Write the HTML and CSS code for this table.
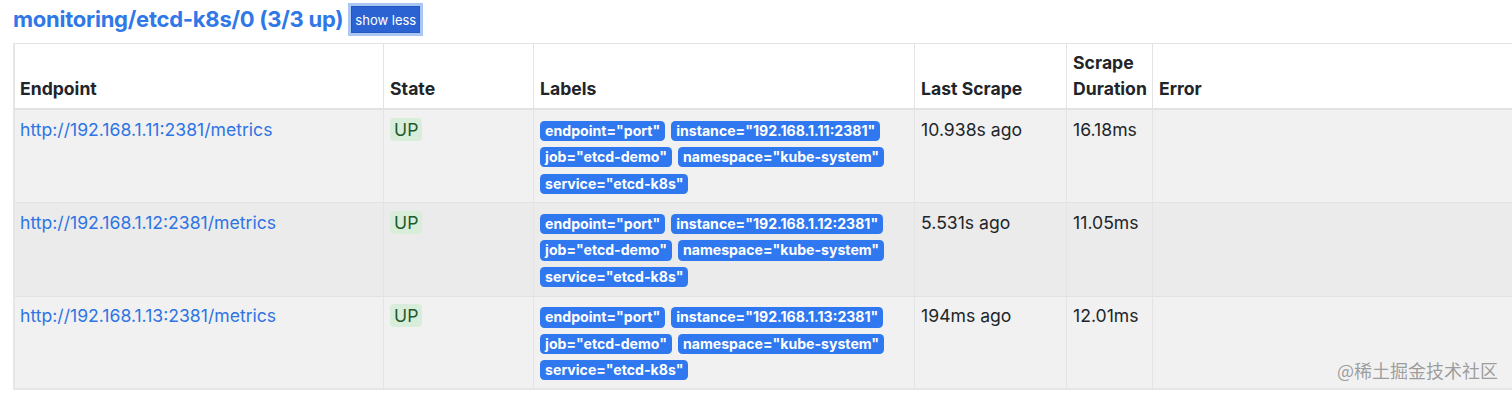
FILE: index.html
```html
<!DOCTYPE html>
<html lang="en">
<head>
  <meta charset="UTF-8" />
  <meta name="viewport" content="width=device-width, initial-scale=1" />
  <title>Targets</title>
  <link rel="stylesheet" href="styles.css">
</head>
<body>

  <div class="pool-head">
    <a class="pool-title" href="#pool-monitoring/etcd-k8s/0">monitoring/etcd-k8s/0 (3/3 up)</a>
    <button class="btn-toggle">show less</button>
  </div>

  <table class="targets">
    <colgroup>
      <col class="c-endpoint">
      <col class="c-state">
      <col class="c-labels">
      <col class="c-last">
      <col class="c-dur">
      <col>
    </colgroup>
    <thead>
      <tr>
        <th>Endpoint</th>
        <th>State</th>
        <th>Labels</th>
        <th>Last Scrape</th>
        <th>Scrape Duration</th>
        <th>Error</th>
      </tr>
    </thead>
    <tbody>
      <tr>
        <td><a href="#">http://192.168.1.11:2381/metrics</a></td>
        <td><span class="state-up">UP</span></td>
        <td>
          <span class="label">endpoint="port"</span>
          <span class="label">instance="192.168.1.11:2381"</span>
          <span class="label">job="etcd-demo"</span>
          <span class="label">namespace="kube-system"</span>
          <span class="label">service="etcd-k8s"</span>
        </td>
        <td>10.938s ago</td>
        <td>16.18ms</td>
        <td></td>
      </tr>
      <tr class="hover">
        <td><a href="#">http://192.168.1.12:2381/metrics</a></td>
        <td><span class="state-up">UP</span></td>
        <td>
          <span class="label">endpoint="port"</span>
          <span class="label">instance="192.168.1.12:2381"</span>
          <span class="label">job="etcd-demo"</span>
          <span class="label">namespace="kube-system"</span>
          <span class="label">service="etcd-k8s"</span>
        </td>
        <td>5.531s ago</td>
        <td>11.05ms</td>
        <td></td>
      </tr>
      <tr>
        <td><a href="#">http://192.168.1.13:2381/metrics</a></td>
        <td><span class="state-up">UP</span></td>
        <td>
          <span class="label">endpoint="port"</span>
          <span class="label">instance="192.168.1.13:2381"</span>
          <span class="label">job="etcd-demo"</span>
          <span class="label">namespace="kube-system"</span>
          <span class="label">service="etcd-k8s"</span>
        </td>
        <td>194ms ago</td>
        <td>12.01ms</td>
        <td></td>
      </tr>
    </tbody>
  </table>

  <div class="watermark">@稀土掘金技术社区</div>

</body>
</html>
```

FILE: styles.css
```css
body {
  font-family: 'Inter', 'Liberation Sans', sans-serif;
  font-size: 17.6px;
  line-height: 1.5;
  color: #212529;
  background: #fff;
  margin: 0;
  padding: 0 13px;
  overflow: hidden;
}

a {
  color: #2f74e4;
  text-decoration: none;
}

.pool-head {
  display: flex;
  align-items: center;
  height: 39px;
  margin-bottom: 4px;
}

.pool-title {
  font-size: 22px;
  font-weight: bold;
  color: #3077e8;
  letter-spacing: -0.25px;
}

.btn-toggle {
  margin-left: 8px;
  height: 27px;
  padding: 0 3px;
  font-family: inherit;
  font-size: 13px;
  color: #fff;
  background: #2b64d2;
  border: 1px solid #2559c0;
  border-radius: 0;
  box-shadow: 0 0 0 3px #a9c6f4;
}

.targets {
  width: 1540px;
  table-layout: fixed;
  border-collapse: collapse;
  border-top: 1px solid #e3e3e3;
  border-left: 2px solid #e6e6e6;
}

.c-endpoint { width: 369px; }
.c-state { width: 150px; }
.c-labels { width: 381px; }
.c-last { width: 152px; }
.c-dur { width: 86px; }

.targets th,
.targets td {
  padding: 6.6px 6.6px;
  border-left: 1px solid #e4e4e4;
  text-align: left;
}

.targets th:first-child,
.targets td:first-child {
  padding-left: 5px;
}

.targets th {
  padding-top: 5.6px;
  padding-bottom: 5.6px;
  vertical-align: bottom;
  font-weight: bold;
  border-bottom: 2px solid #e2e2e2;
}

.targets td {
  vertical-align: top;
  border-top: 1px solid #e2e2e2;
  background: #f1f1f1;
}

.targets tr.hover td {
  background: #ebebeb;
}

.targets tbody tr:last-child td {
  padding-bottom: 6px;
  border-bottom: 2px solid #e6e6e6;
}

.state-up {
  display: inline-block;
  padding: 0 4px;
  line-height: 23px;
  border-radius: 4px;
  background: #d8eedb;
  color: #1e5a2c;
}

.label {
  display: inline-block;
  padding: 3px 5px;
  margin-right: 1px;
  font-size: 14.1px;
  font-weight: bold;
  line-height: 1;
  color: #fff;
  background: #2f78ef;
  border-radius: 4.4px;
  vertical-align: middle;
}

.watermark {
  position: absolute;
  right: 14px;
  top: 357px;
  font-family: 'Noto Sans CJK SC', sans-serif;
  font-size: 18px;
  color: rgba(120, 120, 120, 0.7);
}
```
